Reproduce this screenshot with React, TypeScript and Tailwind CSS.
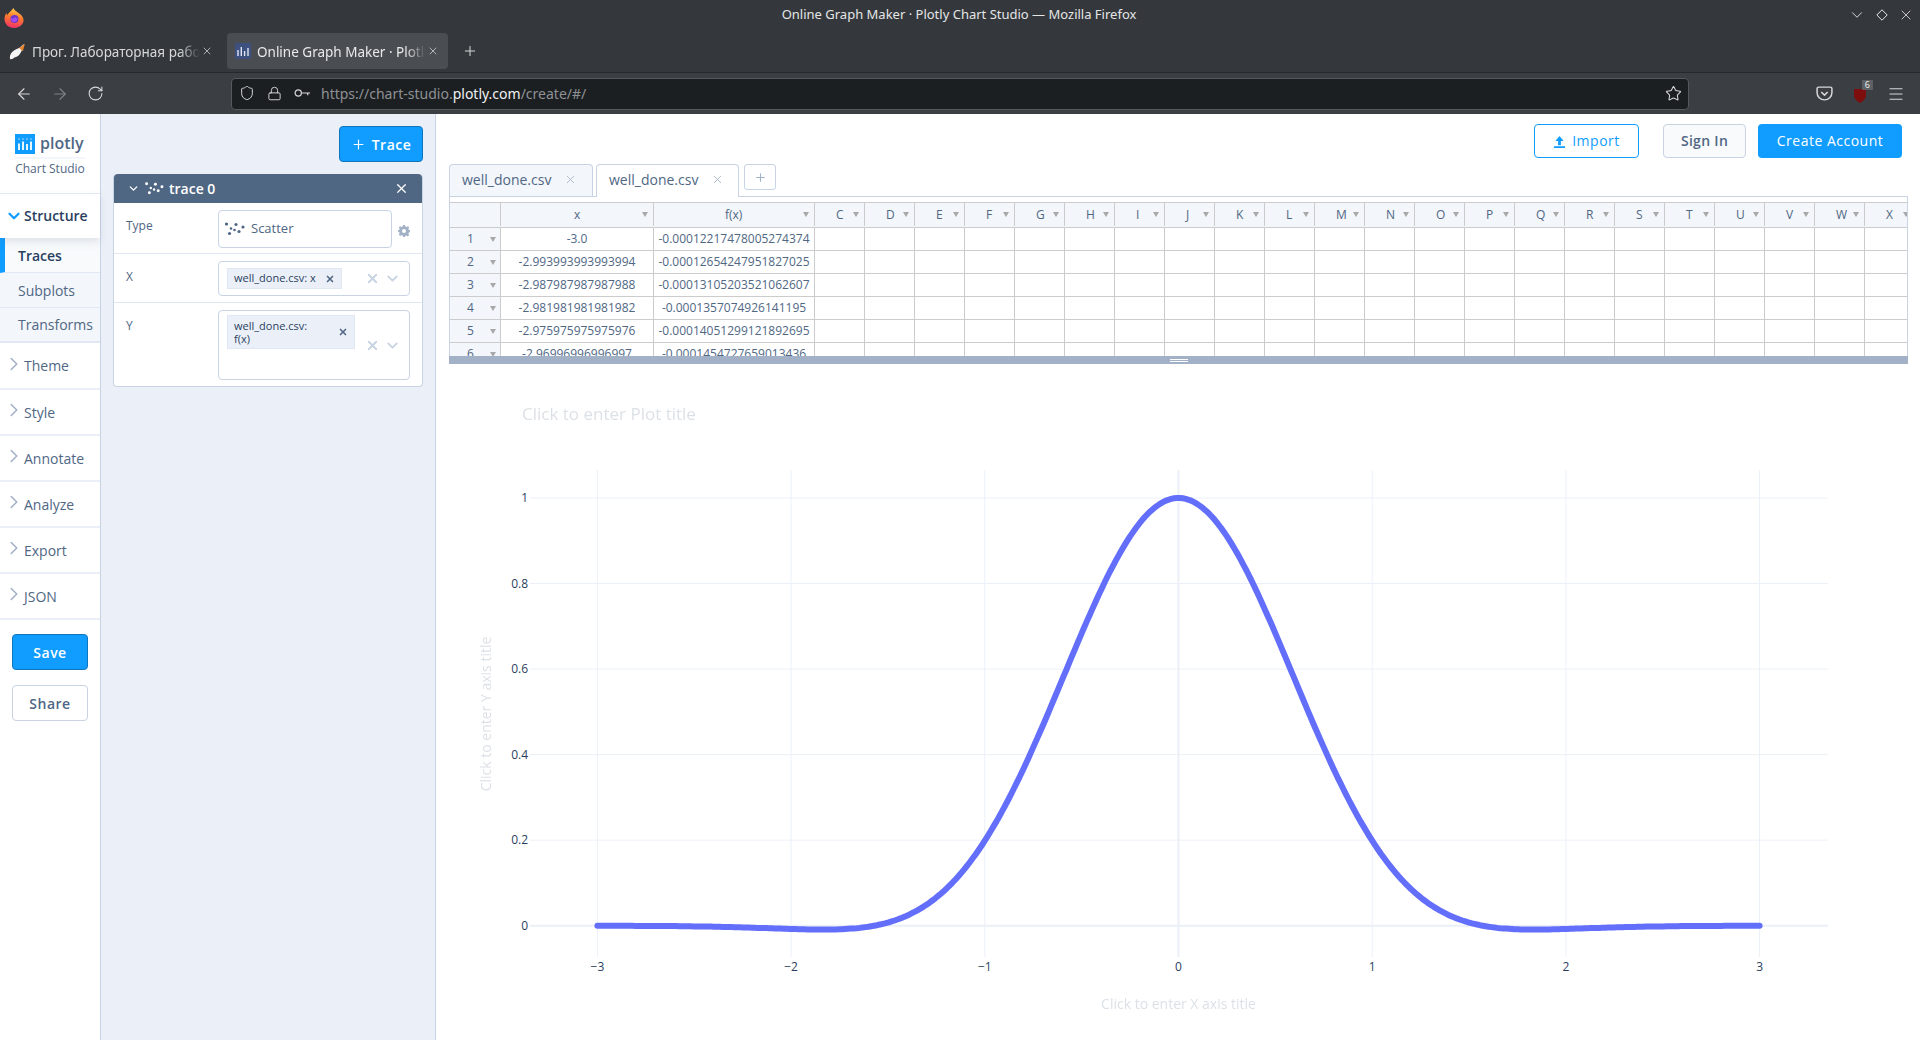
import React from 'react';
import { ArrowLeft, ArrowRight, ChevronDown, ChevronRight, Lock, Menu, Plus, RotateCw, Shield, Star, X } from 'lucide-react';

const COLS = ['C', 'D', 'E', 'F', 'G', 'H', 'I', 'J', 'K', 'L', 'M', 'N', 'O', 'P', 'Q', 'R', 'S', 'T', 'U', 'V', 'W', 'X'];
const ROWS = [
  ['-3.0', '-0.00012217478005274374'],
  ['-2.993993993993994', '-0.00012654247951827025'],
  ['-2.987987987987988', '-0.00013105203521062607'],
  ['-2.981981981981982', '-0.0001357074926141195'],
  ['-2.975975975975976', '-0.00014051299121892695'],
  ['-2.96996996996997', '-0.0001454727659013436'],
];
const SECTIONS = ['Style', 'Annotate', 'Analyze', 'Export', 'JSON'];

// page coordinates of the plot, the svg viewBox below uses them directly
const px = (x: number) => 1178.5 + x * 193.7;
const py = (y: number) => 925.7 - y * 427.7;

const curve = Array.from({ length: 400 }, (_, i) => {
  const x = -3 + (i * 6) / 399;
  const y = Math.cos(x) * Math.exp(-x * x);
  return `${i === 0 ? 'M' : 'L'}${px(x).toFixed(1)} ${py(y).toFixed(1)}`;
}).join('');

function ScatterDots({ className, color }: { className?: string; color: string }) {
  return (
    <svg viewBox="0 0 20 14" className={className} fill={color}>
      <circle cx="1.5" cy="2" r="1.6" />
      <circle cx="4.5" cy="11.5" r="1.6" />
      <circle cx="6" cy="6.5" r="1.3" />
      <circle cx="9.5" cy="8" r="1.3" />
      <circle cx="11" cy="2.5" r="1.6" />
      <circle cx="14" cy="9.5" r="1.6" />
      <circle cx="18" cy="5" r="1.6" />
    </svg>
  );
}

function FirefoxLogo() {
  return (
    <svg viewBox="0 0 20 20" className="w-[20px] h-[20px]">
      <defs>
        <linearGradient id="ff" x1="0.6" y1="0" x2="0.4" y2="1">
          <stop offset="0" stopColor="#ffd14f" />
          <stop offset="0.45" stopColor="#ff7a2b" />
          <stop offset="1" stopColor="#f0306a" />
        </linearGradient>
      </defs>
      <path d="M10 20C4.500 20 .5 16 .5 11c0-2.500.8-4.500 2-6 0 1 .3 1.700.8 2.200C4.200 5 7 3.500 9.500 0c.5 2 3 3.500 5 5 2.500 1.800 4.500 3.500 5 6.500.5 4.500-4 8.500-9.500 8.500z" fill="url(#ff)" />
      <circle cx="10.500" cy="11" r="4" fill="#6f35c9" />
      <path d="M6.800 10c1.800.8 3.600.3 4.500-1 .9.400 1.800 1.300 2.200 2.200-.4 2-2.700 3.400-4.400 3C7.600 13.800 6.800 11.600 6.800 10z" fill="#a04cf0" />
    </svg>
  );
}

function BrowserChrome() {
  return (
    <div className="font-['Noto_Sans','Open_Sans',sans-serif] text-[#d6d8da]">
      <div className="h-[33px] bg-[#34383c] flex items-center">
        <div className="flex-1 pl-[4px] pt-[2px]"><FirefoxLogo /></div>
        <div className="text-[13px] text-[#e4e5e6] mt-[-3px]">Online Graph Maker · Plotly Chart Studio — Mozilla Firefox</div>
        <div className="flex-1 flex items-center justify-end gap-[10px] pr-[6px] mt-[-4px] text-[#e8e9ea]">
          <ChevronDown className="w-[18px] h-[18px]" strokeWidth={1.2} />
          <svg viewBox="0 0 12 12" className="w-[12px] h-[12px]" fill="none" stroke="currentColor"><path d="M6 .8 11.200 6 6 11.200.8 6z" /></svg>
          <X className="w-[16px] h-[16px]" strokeWidth={1.2} />
        </div>
      </div>
      <div className="h-[40px] bg-[#34383c] flex items-start border-b border-[#26292c]">
        <div className="w-[227px] h-[36px] flex items-center pl-[9px] shrink-0">
          <svg viewBox="0 0 16 16" className="w-[17px] h-[17px] shrink-0">
            <path d="M1 15c-.5-2 0-5 2.500-7S9 5 10 4.500c0 0 1.500-1.500 4-3.500-.5 2.500-1 4-2 6-1 2.500-2 4-4 5.500-2 1-3 1-4 2-1 .5-2.500 1-3 .5z" fill="#f6f6f6" />
            <path d="M9.500 4.800 15 .8l-2 7z" fill="#e8842f" />
          </svg>
          <span className="ml-[6px] pt-[2px] w-[168px] whitespace-nowrap overflow-hidden text-[13.5px] [mask-image:linear-gradient(to_right,black_88%,transparent)]">Прог. Лабораторная работа</span>
          <X className="w-[12px] h-[12px] ml-[1px] shrink-0" strokeWidth={1.5} />
        </div>
        <div className="w-[221px] h-[36px] bg-[#4a4e52] rounded-[4px] flex items-center pl-[8px] shrink-0">
          <svg viewBox="0 0 16 16" className="w-[16px] h-[16px] shrink-0">
            <rect width="16" height="16" rx="1" fill="#3d5080" />
            <path d="M3 7v6M6.300 4v9M9.600 8v5M13 5v8" stroke="#dfe6f2" strokeWidth="1.400" />
          </svg>
          <span className="ml-[6px] pt-[2px] w-[169px] whitespace-nowrap overflow-hidden text-[13.5px] text-[#e8e9ea] [mask-image:linear-gradient(to_right,black_88%,transparent)]">Online Graph Maker · Plotly Chart Studio</span>
          <X className="w-[12px] h-[12px] ml-[1px] shrink-0" strokeWidth={1.5} />
        </div>
        <div className="h-[36px] flex items-center ml-[14px]"><Plus className="w-[16px] h-[16px]" strokeWidth={1.500} /></div>
      </div>
      <div className="h-[41px] bg-[#3b3f43] flex items-center">
        <div className="w-[231px] flex items-center pl-[15px] gap-[18px] shrink-0">
          <ArrowLeft className="w-[18px] h-[18px]" strokeWidth={1.500} />
          <ArrowRight className="w-[18px] h-[18px] text-[#7f8285]" strokeWidth={1.500} />
          <RotateCw className="w-[17px] h-[17px]" strokeWidth={1.500} />
        </div>
        <div className="w-[1458px] h-[32px] bg-[#1c1f22] border border-[#55585c] rounded-[4px] flex items-center pl-[7px] pr-[6px] pb-[1px] shrink-0">
          <Shield className="w-[16px] h-[16px]" strokeWidth={1.500} />
          <Lock className="w-[15px] h-[15px] ml-[12px]" strokeWidth={1.500} />
          <svg viewBox="0 0 18 10" className="w-[17px] h-[10px] ml-[12px]" fill="none" stroke="currentColor" strokeWidth="1.300">
            <circle cx="4.500" cy="5" r="3.300" /><path d="M8 5h9M14.500 5v2.500" />
          </svg>
          <div className="ml-[10px] flex-1 text-[14px] text-[#8e9194]">https://chart-studio.<span className="text-[#f0f1f2]">plotly.com</span>/create/#/</div>
          <Star className="w-[17px] h-[17px]" strokeWidth={1.500} />
        </div>
        <div className="flex-1 flex items-center justify-end pr-[15px] gap-[20px]">
          <svg viewBox="0 0 16 16" className="w-[17px] h-[17px]" fill="none" stroke="currentColor" strokeWidth="1.400">
            <path d="M2.500 2h11A1.500 1.500 0 0 1 15 3.500V7a7 7 0 0 1-14 0V3.500A1.500 1.500 0 0 1 2.500 2z" /><path d="m5 6.500 3 3 3-3" />
          </svg>
          <div className="relative w-[14px] h-[18px]">
            <svg viewBox="0 0 14 16" className="w-[14px] h-[16px] mt-[2px]"><path d="M1 2h12v6c0 4-3 6-6 8-3-2-6-4-6-8z" fill="#7e0d0d" /></svg>
            <span className="absolute right-[-6px] top-[-5px] bg-[#5e6164] text-[#e8e9ea] text-[9px] leading-[10px] px-[3px] rounded-[1px]">6</span>
          </div>
          <Menu className="w-[18px] h-[18px]" strokeWidth={1.500} />
        </div>
      </div>
    </div>
  );
}

function Sidebar() {
  return (
    <div className="w-[101px] shrink-0 border-r border-[#c8d4e3] bg-white flex flex-col">
      <div className="h-[79px] flex flex-col items-center pt-[20px]">
        <div className="flex items-center h-[20px] w-[70px]">
          <svg viewBox="0 0 20 20" className="w-[20px] h-[20px] shrink-0">
            <rect width="20" height="20" fill="#119dff" />
            <path d="M4 9.500v6.500M8 7.500v8.500M12 10v6M16 7.500v8.500" stroke="#fff" strokeWidth="1.800" />
            <path d="M4 5v.100M8 5v.100M12 5v.100M16 5v.100" stroke="#a6dcff" strokeWidth="1.600" strokeLinecap="round" />
          </svg>
          <span className="ml-[5px] text-[16px] leading-[20px] font-semibold text-[#506784] mt-[-3px]">plotly</span>
        </div>
        <div className="w-[70px] h-[2px] bg-[#f3f6fa] mt-[3px]" />
        <div className="text-[12px] leading-[16px] text-[#506784] mt-[2px] whitespace-nowrap">Chart Studio</div>
      </div>
      <div className="h-[45px] border-t border-[#dfe8f3] flex items-center pl-[5px] pb-[1px] relative z-10 shadow-[0_4px_8px_rgba(80,103,132,0.15)] bg-white">
        <ChevronDown className="w-[18px] h-[18px] text-[#119dff] shrink-0" strokeWidth={3} />
        <span className="ml-[1px] text-[14px] font-semibold text-[#2a3f5f]">Structure</span>
      </div>
      <div className="h-[35px] bg-[#f8fafc] border-l-[5px] border-[#119dff] border-b border-b-[#dfe8f3] pl-[13px] flex items-center text-[14px] font-semibold text-[#2a3f5f]">Traces</div>
      <div className="h-[35px] bg-[#f3f6fa] border-b border-[#dfe8f3] pl-[18px] flex items-center text-[14px] text-[#506784]">Subplots</div>
      <div className="h-[35px] bg-[#f3f6fa] border-b-2 border-[#dfe8f3] pl-[18px] flex items-center text-[14px] text-[#506784] whitespace-nowrap">Transforms</div>
      <div className="h-[47px] border-b-2 border-[#ebf0f8] flex items-center pl-[3px] text-[14px] text-[#506784]">
        <ChevronRight className="w-[22px] h-[22px] text-[#a2b1c6] mt-[-4px] shrink-0" strokeWidth={1.7} />
        <span className="-ml-[1px]">Theme</span>
      </div>
      {SECTIONS.map((s) => (
        <div key={s} className="h-[46px] border-b-2 border-[#ebf0f8] flex items-center pl-[3px] text-[14px] text-[#506784]">
          <ChevronRight className="w-[22px] h-[22px] text-[#a2b1c6] mt-[-4px] shrink-0" strokeWidth={1.7} />
          <span className="-ml-[1px]">{s}</span>
        </div>
      ))}
      <div className="flex flex-col items-center pt-[14px] gap-[15px]">
        <div className="w-[76px] h-[36px] rounded-[4px] bg-[#119dff] border border-[#0d76bf] text-white text-[14px] font-semibold tracking-[0.5px] flex items-center justify-center">Save</div>
        <div className="w-[76px] h-[36px] rounded-[4px] bg-white border border-[#c8d4e3] text-[#506784] text-[14px] font-semibold tracking-[0.5px] flex items-center justify-center">Share</div>
      </div>
    </div>
  );
}

function Field({ label, h, children }: { label: string; h: string; children: React.ReactNode }) {
  return (
    <div className={`${h} flex pl-[12px] pr-[12px] border-b border-[#dfe8f3] last:border-b-0`}>
      <div className="w-[92px] pt-[15px] text-[12px] leading-[16px] text-[#506784] shrink-0">{label}</div>
      {children}
    </div>
  );
}

function ClearArrows() {
  return (
    <div className="flex items-center gap-[4px] pr-[8px] text-[#c8d4e3] ml-auto">
      <X className="w-[15px] h-[15px]" strokeWidth={3} />
      <ChevronDown className="w-[17px] h-[17px]" strokeWidth={2.500} />
    </div>
  );
}

function TracePanel() {
  return (
    <div className="w-[335px] shrink-0 border-r border-[#c8d4e3] bg-[#ebf0f8] px-[12px]">
      <div className="flex justify-end pt-[12px] pb-[12px]">
        <div className="w-[84px] h-[36px] rounded-[4px] bg-[#119dff] border border-[#0d76bf] text-white text-[14px] font-semibold tracking-[0.5px] flex items-center justify-center gap-[6px]">
          <Plus className="w-[15px] h-[15px]" strokeWidth={1.800} />Trace
        </div>
      </div>
      <div className="rounded-[4px] border border-[#c8d4e3] border-t-0 bg-white">
        <div className="h-[29px] bg-[#506784] rounded-t-[4px] flex items-center pl-[13px] pr-[13px] text-white">
          <ChevronDown className="w-[13px] h-[13px]" strokeWidth={2.500} />
          <ScatterDots className="w-[19px] h-[13px] ml-[5px]" color="#fff" />
          <span className="ml-[5px] text-[14px] font-semibold">trace 0</span>
          <X className="w-[15px] h-[15px] ml-auto" strokeWidth={2} />
        </div>
        <Field label="Type" h="h-[51px]">
          <div className="mt-[7px] w-[174px] h-[38px] border border-[#c8d4e3] rounded-[4px] flex items-center pl-[6px]">
            <ScatterDots className="w-[20px] h-[14px]" color="#506784" />
            <span className="ml-[6px] text-[13px] text-[#506784]">Scatter</span>
          </div>
          <svg viewBox="0 0 24 24" className="w-[12px] h-[12px] ml-[6px] mt-[22px] text-[#a2b1c6]" fill="currentColor">
            <path fillRule="evenodd" d="M10 0h4l.6 3 2.400 1 2.600-1.700 2.800 2.800L20.700 7.700l1 2.300 2.300.6v3.800l-2.300.6-1 2.400 1.700 2.600-2.800 2.800-2.600-1.700-2.400 1L14 24h-4l-.6-2.800-2.400-1-2.600 1.700-2.800-2.800 1.700-2.600-1-2.400L0 14.400v-3.800l2.300-.6 1-2.300-1.700-2.600 2.800-2.800L7 4l2.400-1zM12 8a4 4 0 1 0 0 8 4 4 0 0 0 0-8z" />
          </svg>
        </Field>
        <Field label="X" h="h-[49px]">
          <div className="mt-[7px] w-[192px] h-[35px] border border-[#c8d4e3] rounded-[4px] flex items-center pl-[8px]">
            <div className="w-[115px] h-[21px] bg-[#ebf0f8] border border-[#dfe8f3] flex items-center pl-[6px] text-[11px] text-[#2a3f5f] whitespace-nowrap">
              well_done.csv: x<X className="w-[10px] h-[10px] ml-auto mr-[6px] text-[#506784]" strokeWidth={4} />
            </div>
            <ClearArrows />
          </div>
        </Field>
        <Field label="Y" h="h-[83px]">
          <div className="mt-[7px] w-[192px] h-[70px] border border-[#c8d4e3] rounded-[4px] flex items-center pl-[8px]">
            <div className="w-[128px] h-[34px] bg-[#ebf0f8] border border-[#dfe8f3] flex items-center pl-[6px] text-[11px] leading-[13px] text-[#2a3f5f] self-start mt-[4px]">
              <span>well_done.csv:<br />f(x)</span><X className="w-[10px] h-[10px] ml-auto mr-[6px] text-[#506784]" strokeWidth={4} />
            </div>
            <ClearArrows />
          </div>
        </Field>
      </div>
    </div>
  );
}

function HeaderArrow() {
  return <span className="w-0 h-0 border-x-[3px] border-x-transparent border-t-[5px] border-t-[#a8a8a8] shrink-0" />;
}

function DataTable() {
  return (
    <div className="mr-[12px] ml-[13px] border-x border-[#c8d4e3]">
      <div className="h-[5px]" />
      <div className="h-[154px] overflow-hidden text-[12px] text-[#506784]">
        <div className="flex h-[26px] bg-[#f3f6fa] border-y border-[#ccc] w-[1500px] pb-[1px]">
          <div className="w-[51px] border-r border-[#ccc] shrink-0" />
          <div className="w-[153px] border-r border-[#ccc] shrink-0 flex items-center pl-[73px] pr-[5px] justify-between"><span>x</span><HeaderArrow /></div>
          <div className="w-[161px] border-r border-[#ccc] shrink-0 flex items-center pl-[71px] pr-[5px] justify-between"><span>f(x)</span><HeaderArrow /></div>
          {COLS.map((c) => (
            <div key={c} className="w-[50px] border-r border-[#ccc] shrink-0 flex items-center pl-[21px] pr-[5px] justify-between">
              <span>{c}</span><HeaderArrow />
            </div>
          ))}
        </div>
        {ROWS.map((r, i) => (
          <div key={i} className="flex h-[23px] border-b border-[#ccc] w-[1500px]">
            <div className="w-[51px] bg-[#f3f6fa] border-r border-[#ccc] shrink-0 flex items-center pl-[17px] gap-[16px]"><span className="w-[7px]">{i + 1}</span><HeaderArrow /></div>
            <div className="w-[153px] border-r border-[#ccc] shrink-0 flex items-center justify-center whitespace-nowrap">{r[0]}</div>
            <div className="w-[161px] border-r border-[#ccc] shrink-0 flex items-center justify-center whitespace-nowrap">{r[1]}</div>
            {COLS.map((c) => <div key={c} className="w-[50px] border-r border-[#ccc] shrink-0" />)}
          </div>
        ))}
      </div>
      <div className="h-[8px] bg-[#a2b1c6] flex flex-col items-center justify-center gap-[1px] -mx-px">
        <div className="w-[18px] h-px bg-white" />
        <div className="w-[18px] h-px bg-white" />
      </div>
    </div>
  );
}

function Plot() {
  const xTicks = [-3, -2, -1, 0, 1, 2, 3];
  const yTicks = [0, 0.2, 0.4, 0.6, 0.8, 1];
  return (
    <svg viewBox="436 364 1484 676" className="w-[1484px] h-[676px] block font-['Open_Sans',sans-serif]">
      <text x="522" y="420" fontSize="17" fill="#506784" opacity="0.2">Click to enter Plot title</text>
      {xTicks.filter((x) => x !== 0).map((x) => (
        <line key={x} x1={px(x)} x2={px(x)} y1="470" y2="957" stroke="#ebf0f8" />
      ))}
      {yTicks.filter((y) => y !== 0).map((y) => (
        <line key={y} x1="530" x2="1828" y1={py(y)} y2={py(y)} stroke="#ebf0f8" />
      ))}
      <line x1={px(0)} x2={px(0)} y1="470" y2="957" stroke="#ebf0f8" strokeWidth="2" />
      <line x1="530" x2="1828" y1={py(0)} y2={py(0)} stroke="#ebf0f8" strokeWidth="2" />
      <path d={curve} fill="none" stroke="#636efa" strokeWidth="6" strokeLinecap="round" strokeLinejoin="round" />
      {yTicks.map((y) => (
        <text key={y} x="528" y={py(y) + 4} fontSize="12" textAnchor="end" fill="#2a3f5f">{y}</text>
      ))}
      {xTicks.map((x) => (
        <text key={x} x={px(x)} y="971" fontSize="12" textAnchor="middle" fill="#2a3f5f">{x < 0 ? `\u2212${-x}` : x}</text>
      ))}
      <text x={px(0)} y="1009" fontSize="14" textAnchor="middle" fill="#506784" opacity="0.2">Click to enter X axis title</text>
      <text x="491" y="714" fontSize="14" textAnchor="middle" fill="#506784" opacity="0.2" transform="rotate(-90 491 714)">Click to enter Y axis title</text>
    </svg>
  );
}

function Workspace() {
  return (
    <div className="flex-1 min-w-0 bg-white overflow-hidden">
      <div className="h-[50px] flex justify-end items-start pt-[10px] pr-[18px]">
        <div className="w-[105px] h-[34px] rounded-[4px] border border-[#119dff] text-[#119dff] text-[14px] tracking-[0.5px] flex items-center justify-center gap-[6px] pb-[1px]">
          <svg viewBox="0 0 14 14" className="w-[13px] h-[13px] mt-[2px]" fill="currentColor"><path d="M7 1 2.500 6.500h3V11h3V6.500h3zM1 12h12v2H1z" /></svg>
          Import
        </div>
        <div className="ml-[24px] w-[83px] h-[34px] rounded-[4px] border border-[#c8d4e3] bg-[#f8fafc] text-[#506784] text-[14px] font-semibold tracking-[0.3px] flex items-center justify-center pb-[1px]">Sign In</div>
        <div className="ml-[12px] w-[144px] h-[34px] rounded-[4px] bg-[#119dff] text-white text-[14px] tracking-[0.5px] flex items-center justify-center pb-[1px]">Create Account</div>
      </div>
      <div className="h-[33px] ml-[13px] mr-[12px] flex items-start border-b border-[#c8d4e3] text-[14px] text-[#506784]">
        <div className="w-[144px] h-[32px] bg-[#f3f6fa] border border-[#c8d4e3] border-b-0 rounded-t-[4px] flex items-center pl-[12px] pb-[3px]">
          well_done.csv<X className="w-[13px] h-[13px] ml-[13px] text-[#a2b1c6]" strokeWidth={1.500} />
        </div>
        <div className="ml-[3px] w-[143px] h-[33px] bg-white border border-[#c8d4e3] border-b-0 rounded-t-[4px] flex items-center pl-[12px] pb-[4px] relative z-10">
          well_done.csv<X className="w-[13px] h-[13px] ml-[13px] text-[#a2b1c6]" strokeWidth={1.500} />
        </div>
        <div className="ml-[5px] w-[32px] h-[26px] border border-[#c8d4e3] rounded-[3px] flex items-center justify-center text-[#a2b1c6]">
          <Plus className="w-[13px] h-[13px]" strokeWidth={2} />
        </div>
      </div>
      <DataTable />
      <Plot />
    </div>
  );
}

export default function App() {
  return (
    <div className="h-[1040px] w-[1920px] overflow-hidden flex flex-col font-['Open_Sans',sans-serif]">
      <BrowserChrome />
      <div className="flex flex-1 min-h-0">
        <Sidebar />
        <TracePanel />
        <Workspace />
      </div>
    </div>
  );
}
